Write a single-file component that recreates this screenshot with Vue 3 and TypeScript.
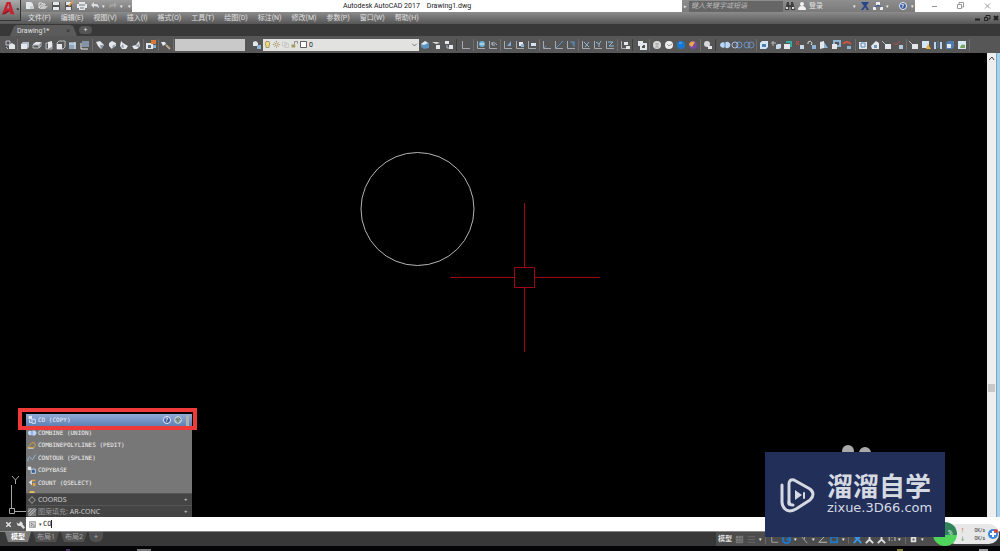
<script setup lang="ts">
import { ref } from 'vue'

type Shape = { d: string; f?: string; s?: string; w?: number }
type Tool = { icon: string; label: string }

const W = '#e4e8ed'
const B = '#8fb4d6'
const G = '#b9bdc2'
const axis: Shape = { d: 'M2.5 2v7.5H10', s: '#a4aab0' }

const icons: Record<string, Shape[]> = {
  new: [{ d: 'M2 2h5l2 2v5H2z', f: W }, { d: 'M6 6h4v3H6z', f: '#c9cdd2' }],
  open: [{ d: 'M2 3h3l1 1h2v1H4L2 8z', s: '#e2e2e2' }, { d: 'M5 6h6L8 9H2z', f: '#c8c8c8' }],
  save: [{ d: 'M2 2h8v8H2z', f: '#555' }, { d: 'M3 2h6v3H3zM3 7h6v3H3z', f: W }],
  saveas: [{ d: 'M2 2h7v8H2z', f: '#555' }, { d: 'M3 2h5v3H3zM3 7h5v3H3z', f: W }, { d: 'M6 6l4-5', s: '#d89a50', w: 2 }],
  print: [{ d: 'M3 2h6v2h2v4H9v2H3V8H1V4h2z', f: W }, { d: 'M3 5h6M4 8h4', s: '#777' }],
  undo: [{ d: 'M2 5l3-3v2h3q2 1 2 4Q8 6 5 6v2z', f: '#d5d5d5' }],
  redo: [{ d: 'M10 5L7 2v2H4Q2 5 2 8q2-2 5-2v2z', f: '#a0a0a0' }],
  views: [{ d: 'M2 2h4v4H2z', s: G }, { d: 'M5 6l3-2 3 2v4H5z', f: W }, { d: 'M2 8l2 2', s: G }],
  top: [{ d: 'M2 5l2-2h6v5L8 10H2z', f: '#aebccb' }, { d: 'M2 5h6v5H2z', f: W }],
  bottom: [{ d: 'M2 5l3-2h5L8 6H2z', f: W }, { d: 'M2 6h6v3H2zM8 6l2-3v4L8 9z', s: G }],
  left: [{ d: 'M3 4h6v6H3z', s: G }, { d: 'M5 3l4-1v6l-4 2z', f: W }],
  right: [{ d: 'M2 4l2-2h6v6L8 10H2z', s: G }, { d: 'M2 5h5v5H2z', f: W }],
  front: [{ d: 'M2 3h7v7H2z', f: '#8fa6bd' }, { d: 'M2 5h6M8 3v7', s: W }],
  back: [{ d: 'M3 2h7v6H3z', f: '#8295a8' }, { d: 'M2 4v6h7', s: W }],
  sw: [{ d: 'M2 3l4-1 4 4-3 4-3-3z', f: W }, { d: 'M6 6l1 4 3-4z', f: '#8d9aaa' }],
  se: [{ d: 'M3 4l3-2 4 2v3l-3 1-1 2-3-3z', f: W }, { d: 'M6 7l4-2-2 4z', f: '#97a3b1' }],
  ne: [{ d: 'M3 2l2 2 5 3-2 3H4L2 7z', f: W }, { d: 'M5 5L3 8l3 1z', f: '#8d9aaa' }],
  nw: [{ d: 'M9 2l1 5-3 3H4L2 7l4-1z', f: W }, { d: 'M5 7l4-2v3z', f: '#8d9aaa' }],
  camera: [{ d: 'M1 4h7v6H1z', f: W }, { d: 'M3 6h3v3H3z', f: '#59687a' }, { d: 'M6 1h5v4H6z', f: '#d57b38' }, { d: 'M8 6h3v3H8z', f: B }],
  brush: [{ d: 'M1 3h4l1 2-3 2z', f: W }, { d: 'M6 6l4 4', s: '#bca88a', w: 2 }],
  layers: [{ d: 'M2 3l3-1 2 2v3H2z', f: W }, { d: 'M6 6h4v4H6z', f: B }],
  layer1: [{ d: 'M2 5l4-3 4 2v5l-5 1-3-2z', f: '#5d92bd' }, { d: 'M2 5l4-3 3 2-4 2z', f: W }],
  layer2: [{ d: 'M1 3h5l3 1-4 1z', f: '#ddd' }, { d: 'M5 6h4v4H5z', f: W }],
  layer3: [{ d: 'M2 2h4v3H2zM6 6h4v4H6z', f: W }, { d: 'M4 6v3h2', s: G }],
  ucs: [axis],
  ucsWorld: [axis, { d: 'M4 5a3 3 0 1 0 6 0a3 3 0 1 0-6 0', f: '#68b1d2' }, { d: 'M5 5h4', s: W }],
  ucsPrev: [axis, { d: 'M5 5q2-3 5 1M5 3v3h3', s: '#aab7c6' }],
  ucsFace: [axis, { d: 'M5 7l4-5v5z', f: '#80a8d0' }],
  ucsObj: [axis, { d: 'M5 3h4v4H5z', f: W }, { d: 'M7 5h3v3H7z', f: B }],
  ucsView: [axis, { d: 'M5 4h5v3H5z', f: '#d4e3f3' }],
  ucsOrigin: [axis, { d: 'M3 9l2-2', s: '#6696bd' }],
  ucsZ: [axis, { d: 'M3 9l7-7', s: '#5a94c7' }],
  ucs3: [axis, { d: 'M5 3h3v3M9 2v6', s: '#5a94c7' }],
  ucsX: [axis, { d: 'M4 3l5 5M9 3L5 8', s: B }],
  ucsY: [axis, { d: 'M4 3l3 2 2-3M7 5v3', s: B }],
  ucsR: [axis, { d: 'M4 3h5L5 7h5', s: B }],
  ucsApply: [axis, { d: 'M5 3h4v3H5zM7 7h4v3H7z', f: W }],
  named: [{ d: 'M2 2h5v5H2z', f: W }, { d: 'M5 5h5v5H5z', s: W, w: 2 }],
  wire: [{ d: 'M2 6a4 4 0 1 0 8 0a4 4 0 1 0-8 0', f: '#d8d8d8' }, { d: 'M4 5h4M4 8h4M6 4v4', s: '#a5a5a5' }],
  hidden: [{ d: 'M2 6a4 4 0 1 0 8 0a4 4 0 1 0-8 0', f: '#eee' }, { d: 'M4 5l2 2 3-2', s: '#999' }],
  real: [{ d: 'M2 6a4 4 0 1 0 8 0a4 4 0 1 0-8 0', f: '#1878d0' }, { d: 'M4 4h3', s: '#72b7ee' }],
  concept: [{ d: 'M2 6a4 4 0 1 0 8 0a4 4 0 1 0-8 0', f: '#7849a7' }, { d: 'M2 6a4 4 0 0 1 6-3L5 8z', f: '#edac3d' }],
  styles: [{ d: 'M2 5a3 3 0 1 0 6 0a3 3 0 1 0-6 0', f: '#d8d8d8' }, { d: 'M6 7h4v3H6z', f: W }],
  union: [{ d: 'M1 6a3 3 0 0 1 5-2a3 3 0 1 1 0 4a3 3 0 0 1-5-2', f: '#bcd6f7' }, { d: 'M6 4v4', s: '#5383c4' }],
  subtract: [{ d: 'M5 6a3 3 0 1 0 6 0a3 3 0 1 0-6 0', s: '#6c96d0' }, { d: 'M1 6a3 3 0 1 0 6 0a3 3 0 1 0-6 0', s: '#a9bddb' }],
  intersect: [{ d: 'M1 6a3 3 0 1 0 6 0a3 3 0 1 0-6 0M5 6a3 3 0 1 0 6 0a3 3 0 1 0-6 0', s: '#6c8db9' }],
  extrude: [{ d: 'M2 4l2-2h6v6l-2 2H2z', f: '#d6e5f5' }, { d: 'M4 5h4v3H4z', f: '#4f7fae' }],
  move: [{ d: 'M1 4h5M3 2v5', s: '#bbb' }, { d: 'M6 6l2-1h3v4l-2 1H6z', f: '#c8d9eb' }],
  offset: [{ d: 'M2 5h6v5H2z', f: W }, { d: 'M4 2h6v6H8V4H4z', f: '#3aa89f' }],
  del: [{ d: 'M2 2l3 4M5 2L2 6', s: '#d54d45' }, { d: 'M6 6h4v4H6z', f: '#c8d9eb' }],
  rotate: [{ d: 'M2 5a2 2 0 1 1 3 1', s: W }, { d: 'M6 6h4v4H6z', f: B }],
  taper: [{ d: 'M2 3l4-1v7l-4 1z', f: W }, { d: 'M6 3l4 6H6z', f: B }],
  copyf: [{ d: 'M4 2h6v5H4z', s: B, w: 2 }, { d: 'M2 5h5v5H2z', f: W }],
  color: [{ d: 'M1 5q3-4 8 0', s: '#c95448', w: 2 }, { d: 'M5 7h4v3H5z', f: B }],
  imprint: [{ d: 'M2 3h8v7H2z', f: W }, { d: 'M4 4h4v4H4z', s: '#568ac2' }],
  clean: [{ d: 'M2 7l5-5 3 2v6H3z', f: W }, { d: 'M5 6h3v3H5z', f: '#6a9ac4' }],
  shell: [{ d: 'M1 2l3 3', s: G }, { d: 'M4 5h6v5H4z', f: W }],
  check: [{ d: 'M1 4l2 2 4-4', s: '#ba4e48' }, { d: 'M6 6h4v4H6z', f: '#b8c8dc' }],
  slice: [{ d: 'M2 2h7v7H2z', f: '#d3e6f7' }, { d: 'M8 5l3 5H6z', f: '#e8b140' }],
  thick: [{ d: 'M2 3h2v7H2zM8 3h2v7H8z', f: '#b8d4ee' }, { d: 'M6 2v7', s: '#4884bd' }],
  tosolid: [{ d: 'M2 4l2-2h6v6l-2 2H2z', f: '#4e7eb0' }, { d: 'M3 5h4v4H3z', f: W }],
  tosurf: [{ d: 'M2 2h8v8H2z', f: '#dbe9f6' }, { d: 'M4 9q1-5 5-3v3z', f: '#72a659' }],
  find: [{ d: 'M3 2h2v3h2V2h2l2 8H7V7H5v3H1z', f: '#3e3e3e' }, { d: 'M2 7h2v2H2zM8 7h2v2H8z', f: '#ddd' }],
  user: [{ d: 'M4 4a2 2 0 1 0 4 0a2 2 0 1 0-4 0M2 10q0-4 4-4t4 4z', f: '#f2f2f2' }],
  exchange: [{ d: 'M2 2l3 4-3 4h2l6-8H8zM5 2H3l5 8h2z', f: '#27438b' }],
  cloud: [{ d: 'M4 2h4v3H4zM1 7h3v3H1zM8 7h3v3H8z', f: '#eee' }, { d: 'M6 5v2M3 7l3-2 3 2', s: '#3c5795' }],
  copy: [{ d: 'M2 1h4v4H2z', f: W }, { d: 'M6 5h4v5H6zM3 6v3h3', s: '#e0ebfa' }],
  pedit: [{ d: 'M1 9l5-6q4 0 4 3t-3 3z', s: '#e0a53b' }, { d: 'M1 10h7', s: '#ddd' }],
  spline: [{ d: 'M1 10c1-10 4-3 5-2S9 2 11 2', s: '#9fc2ed' }],
  copybase: [{ d: 'M1 2h4v4H1z', f: W }, { d: 'M5 5h5v5H5z', f: '#345d91', s: '#dce8f6' }],
  qselect: [{ d: 'M2 5l4-3v7z', f: '#ddd' }, { d: 'M6 2h4v2H6zM7 6h3v4H7z', f: '#e0a345' }],
  gear: [{ d: 'M3 6a3 3 0 1 0 6 0a3 3 0 1 0-6 0', s: '#999' }, { d: 'M6 1v2M6 9v2M1 6h2M9 6h2', s: '#999' }],
  hatch: [{ d: 'M1 1h10v10H1z', f: '#777' }, { d: 'M2 9l7-7M3 11l8-8M1 6l4-4', s: '#ccc' }],
  grid: [{ d: 'M2 2h8v8H2z', f: '#7d7d7d' }, { d: 'M2 5h8M2 8h8M5 2v8M8 2v8', s: '#666' }],
  snap: [{ d: 'M2 3h8M2 6h8M2 9h8', s: '#696969' }],
  ortho: [{ d: 'M3 2v7h7', s: '#a8a8a8' }],
  polar: [{ d: 'M2 6a4 4 0 1 0 8 0a4 4 0 1 0-8 0M6 6h4', s: '#1b78d2', w: 2 }],
  iso: [{ d: 'M2 2l7 8M6 6V2', s: '#a8a8a8' }],
  track: [{ d: 'M9 2L2 9h9', s: '#c5c5c5' }],
  osnap: [{ d: 'M2 3h7v6H2z', s: '#2277bd', w: 2 }],
  annoBlue: [{ d: 'M6 1v4L2 10M6 5l4 5M3 4h6', s: '#3597ed', w: 2 }],
  anno: [{ d: 'M6 2v4l-4 4M6 6l4 4', s: '#ddd', w: 2 }],
  status: [{ d: 'M3 3h6v6H3z', f: '#ddd' }, { d: 'M5 5h2v2H5z', f: '#555' }],
  bulb: [{ d: 'M4 8Q2 5 4 2h4q2 3 0 6v2H4z', f: '#f0dc79', s: '#918756' }],
  sun: [{ d: 'M4 6a2 2 0 1 0 4 0a2 2 0 1 0-4 0M6 1v2M6 9v2M1 6h2M9 6h2M3 3l1 1M9 3L8 4M3 9l1-1M9 9L8 8', s: '#9c9254' }],
  freeze: [{ d: 'M2 3h5v5H2zM5 5h5v5H5z', s: '#c1c1bd' }],
  lock: [{ d: 'M2 6h5v4H2z', f: '#a59a67' }, { d: 'M6 6V2h4v3', s: '#777' }],
  swatch: [{ d: 'M2 2h8v8H2z', f: '#fff', s: '#333' }],
  wrench: [{ d: 'M1 3l2 2 2-1V2q4 0 4 4l3 4-2 2-4-4q-5 1-5-5z', f: '#e0e0e0' }],
  close: [{ d: 'M3 3l6 6M9 3L3 9', s: '#e5e5e5', w: 2 }],
  prompt: [{ d: 'M2 2h8v8H2z', f: '#c8c8c8', s: '#999' }, { d: 'M4 4l2 2-2 2M7 8h2', s: '#666' }],
}

const t = (s: string): Tool[] => s.split(' ').map((i) => ({ icon: i, label: i }))

const menus = ['文件(F)', '编辑(E)', '视图(V)', '插入(I)', '格式(O)', '工具(T)', '绘图(D)', '标注(N)', '修改(M)', '参数(P)', '窗口(W)', '帮助(H)']
const quick = t('new open save saveas print')
const viewGroups = [t('views'), t('top bottom left right front back'), t('sw se ne nw'), t('camera'), t('brush')]
const layerIcons = ['bulb', 'sun', 'freeze', 'lock', 'swatch']
const modelGroups: { tools: Tool[]; wide?: boolean }[] = [
  { tools: t('layer1 layer2 layer3'), wide: true },
  { tools: t('ucs') },
  { tools: t('ucsWorld ucsPrev') },
  { tools: t('ucsFace ucsObj ucsView') },
  { tools: t('ucsOrigin ucsZ ucs3') },
  { tools: t('ucsX ucsY ucsR') },
  { tools: t('ucsApply'), wide: true },
  { tools: t('named') },
  { tools: t('wire hidden real concept') },
  { tools: t('styles'), wide: true },
  { tools: t('union subtract intersect') },
  { tools: t('extrude move offset del rotate taper copyf color') },
  { tools: t('imprint clean shell check') },
  { tools: t('shell slice thick tosolid tosurf') },
]
const suggestions = [
  { icon: 'copy', text: 'CO (COPY)' },
  { icon: 'union', text: 'COMBINE (UNION)' },
  { icon: 'pedit', text: 'COMBINEPOLYLINES (PEDIT)' },
  { icon: 'spline', text: 'CONTOUR (SPLINE)' },
  { icon: 'copybase', text: 'COPYBASE' },
  { icon: 'qselect', text: 'COUNT (QSELECT)' },
]
const statusItems = ['grid', 'snap', '▾', '|', 'ortho', 'polar', '▾', 'iso', '▾', 'track', 'osnap', '▾', '|', 'annoBlue', 'anno', 'anno', '1:1', '▾', '|', 'status', '▾']
const layouts = ['模型', '布局1', '布局2']

const command = ref('CO')
const keyword = ref('')
const active = ref(0)
</script>

<template>
  <div class="app">
    <header class="head">
      <button class="logo" aria-label="应用程序菜单">
        <svg viewBox="0 0 21 21" class="logo-art">
          <path d="M2 15L7 2h4l4 13h-4l-1-3H7l-2 3z" fill="#c62430" />
          <path d="M7 9l2-5 1 5z" fill="#8d878a" />
          <path d="M2 15l6-4 2 1-5 3z" fill="#8c1823" />
          <path d="M17 9h3l-1 2z" fill="#222" />
        </svg>
      </button>
      <div class="title">
        <div class="quick">
          <button v-for="q in quick" :key="q.icon" :aria-label="q.label">
            <svg viewBox="0 0 12 12"><path v-for="(p, i) in icons[q.icon]" :key="i" :d="p.d" :fill="p.f ?? 'none'" :stroke="p.s" :stroke-width="p.w ?? 1" /></svg>
          </button>
          <button aria-label="放弃"><svg viewBox="0 0 12 12"><path :d="icons.undo[0].d" fill="#ddd" /></svg></button>
          <i class="caret">▾</i>
          <button aria-label="重做"><svg viewBox="0 0 12 12"><path :d="icons.redo[0].d" fill="#a5a5a5" /></svg></button>
          <i class="caret">▾</i>
          <i class="caret end">▾</i>
        </div>
        <h1>Autodesk AutoCAD 2017 &nbsp;&nbsp; Drawing1.dwg</h1>
        <div class="info">
          <i class="caret side">▸</i>
          <input v-model="keyword" class="search" placeholder="键入关键字或短语" aria-label="键入关键字或短语" />
          <button aria-label="搜索"><svg viewBox="0 0 12 12"><path v-for="(p, i) in icons.find" :key="i" :d="p.d" :fill="p.f ?? 'none'" /></svg></button>
          <button class="login"><svg viewBox="0 0 12 12"><path :d="icons.user[0].d" fill="#f2f2f2" /></svg>登录</button>
          <i class="caret push">▾</i>
          <button v-for="n in ['exchange', 'cloud']" :key="n" :aria-label="n">
            <svg viewBox="0 0 12 12"><path v-for="(p, i) in icons[n]" :key="i" :d="p.d" :fill="p.f ?? 'none'" :stroke="p.s" /></svg>
          </button>
          <i class="caret">▾</i>
          <button class="help" aria-label="帮助"><b>?</b></button>
          <i class="caret">▾</i>
        </div>
        <div class="winctl">
          <button aria-label="最小化"><svg viewBox="0 0 12 12"><path d="M4 6.500h5" stroke="#999" /></svg></button>
          <button aria-label="还原"><svg viewBox="0 0 12 12"><path d="M3.500 4.500h4v4h-4zM5 4V2.500h4.500V7H8" fill="none" stroke="#999" /></svg></button>
          <button aria-label="关闭"><svg viewBox="0 0 12 12"><path d="M4 3.500l5 5M9 3.500l-5 5" stroke="#999" /></svg></button>
        </div>
      </div>
      <nav class="menu">
        <button v-for="m in menus" :key="m">{{ m }}</button>
        <div class="docctl">
          <button aria-label="最小化图形"><svg viewBox="0 0 12 12"><path d="M3 7.500h5" stroke="#222" stroke-width="2" /></svg></button>
          <button aria-label="还原图形"><svg viewBox="0 0 12 12"><path d="M3.500 5.500h3v3h-3zM5 5V3.500h4V7H7" fill="none" stroke="#222" /></svg></button>
          <button aria-label="关闭图形"><svg viewBox="0 0 12 12"><path d="M4 4l4 4M8 4L4 8" stroke="#222" stroke-width="2" /></svg></button>
        </div>
      </nav>
    </header>

    <div class="tabs">
      <button class="tab">Drawing1*<span>×</span></button>
      <button class="add">+</button>
    </div>

    <div class="toolbar">
      <div v-for="(g, gi) in viewGroups" :key="gi" class="group">
        <button v-for="(b, bi) in g" :key="bi" :aria-label="b.label">
          <svg viewBox="0 0 12 12"><path v-for="(p, i) in icons[b.icon]" :key="i" :d="p.d" :fill="p.f ?? 'none'" :stroke="p.s" :stroke-width="p.w ?? 1" /></svg>
        </button>
      </div>
      <select class="style-select" aria-label="视觉样式" disabled><option></option></select>
      <div class="group layer-group">
        <button aria-label="图层特性"><svg viewBox="0 0 12 12"><path v-for="(p, i) in icons.layers" :key="i" :d="p.d" :fill="p.f" /></svg></button>
      </div>
      <div class="layer-box">
        <svg v-for="n in layerIcons" :key="n" viewBox="0 0 12 12"><path v-for="(p, i) in icons[n]" :key="i" :d="p.d" :fill="p.f ?? 'none'" :stroke="p.s" /></svg>
        <select aria-label="图层"><option>0</option></select>
        <svg class="chev" viewBox="0 0 12 12"><path d="M3 5l3 3 3-3" fill="none" stroke="#555" /></svg>
      </div>
      <div v-for="(g, gi) in modelGroups" :key="'m' + gi" class="group" :class="{ wide: g.wide }">
        <button v-for="(b, bi) in g.tools" :key="bi" :aria-label="b.label">
          <svg viewBox="0 0 12 12"><path v-for="(p, i) in icons[b.icon]" :key="i" :d="p.d" :fill="p.f ?? 'none'" :stroke="p.s" :stroke-width="p.w ?? 1" /></svg>
        </button>
      </div>
    </div>

    <main class="work">
      <div class="canvas">
        <svg class="drawing" width="987" height="464" viewBox="0 53 987 464" fill="none">
          <circle cx="417.500" cy="209" r="56.500" stroke="#b4b4b4" />
          <path d="M450 277.500h64M535 277.500h65M524.500 203v64M524.500 288v64M514.500 267.500h20v20h-20z" stroke="#9e0613" />
          <path d="M11.500 485v23M14 511.500h12M9.500 508.500h5v5h-5zM12 476l3.500 4 3.500-4M15.500 480v4" stroke="#a5a5a5" />
          <circle cx="848" cy="451" r="6" fill="#aaa" /><circle cx="865" cy="453" r="6" fill="#aaa" />
        </svg>
        <div class="popup">
          <ul class="list">
            <li v-for="(s, si) in suggestions" :key="s.text" :class="{ on: si === 0 }">
              <svg viewBox="0 0 12 12"><path v-for="(p, i) in icons[s.icon]" :key="i" :d="p.d" :fill="p.f ?? 'none'" :stroke="p.s" :stroke-width="p.w ?? 1" /></svg>
              <span>{{ s.text }}</span>
              <template v-if="si === 0">
                <button class="help" aria-label="命令帮助"><b>?</b></button>
                <button class="web" aria-label="联机搜索"><svg viewBox="0 0 12 12"><circle cx="6" cy="6" r="4" fill="#8fa5a0" stroke="#dce4e4" /><path d="M3 5h3v4M7 3l2 3" stroke="#4c6b59" fill="none" /></svg></button>
              </template>
            </li>
          </ul>
          <div class="more"><i></i></div>
          <div class="cat"><svg viewBox="0 0 12 12"><path v-for="(p, i) in icons.gear" :key="i" :d="p.d" fill="none" :stroke="p.s" /></svg><span>COORDS</span><b>+</b></div>
          <div class="cat"><svg viewBox="0 0 12 12"><path v-for="(p, i) in icons.hatch" :key="i" :d="p.d" :fill="p.f ?? 'none'" :stroke="p.s" /></svg><span><em>图案填充:</em> AR-CONC</span><b>+</b></div>
          <div class="thumb"></div>
          <div class="mark"></div>
        </div>
      </div>
      <div class="scroll">
        <svg viewBox="0 0 9 12"><path d="M2 7l3-3 2 3" fill="none" stroke="#444" /></svg>
        <i></i>
      </div>
      <div class="edge"></div>
      <div class="brand">
        <svg class="play" viewBox="0 0 36 36" fill="none" stroke="#d5d9e2" stroke-width="3" stroke-linejoin="round" stroke-linecap="round">
          <path d="M9 27V7q0-5 5-4l16 9q6 5 0 11l-14 9q-7 4-11 0-3-3-3-7V8" />
          <path d="M9 25q0 3 4 3" />
          <path d="M15 13l7 5-7 5z" fill="#d5d9e2" stroke="none" /><path d="M24 16v5" stroke-width="2" />
        </svg>
        <div class="brand-text"><strong>溜溜自学</strong><span>zixue.3D66.com</span></div>
      </div>
    </main>

    <div class="command">
      <div class="cmd-tools">
        <button aria-label="关闭命令行"><svg viewBox="0 0 12 12"><path :d="icons.close[0].d" stroke="#e5e5e5" stroke-width="2" /></svg></button>
        <button aria-label="自定义"><svg viewBox="0 0 12 12"><path :d="icons.wrench[0].d" fill="#e0e0e0" /></svg></button>
      </div>
      <svg class="prompt" viewBox="0 0 12 12"><path v-for="(p, i) in icons.prompt" :key="i" :d="p.d" :fill="p.f ?? 'none'" :stroke="p.s" /></svg>
      <i class="caret dark">▾</i>
      <div class="entry">
        <input v-model="command" aria-label="键入命令" size="2" /><span class="cursor"></span>
      </div>
    </div>

    <footer class="foot">
      <div class="layouts">
        <button v-for="(l, i) in layouts" :key="l" :class="{ on: active === i }" @click="active = i">{{ l }}</button>
        <button class="plus">+</button>
      </div>
      <div class="status">
        <button class="model">模型</button>
        <template v-for="(s, i) in statusItems" :key="i">
          <button v-if="icons[s]" :aria-label="s"><svg viewBox="0 0 12 12"><path v-for="(p, k) in icons[s]" :key="k" :d="p.d" :fill="p.f ?? 'none'" :stroke="p.s" :stroke-width="p.w ?? 1" /></svg></button>
          <i v-else-if="s === '|'" class="div"></i>
          <i v-else-if="s === '▾'" class="caret">▾</i>
          <span v-else>{{ s }}</span>
        </template>
      </div>
      <div class="net">
        <div class="ball">%</div>
        <div class="arrows"><i>↑</i><b>↓</b></div>
        <div class="rates"><span>0K/s</span><span>0K/s</span></div>
        <svg viewBox="0 0 12 12"><circle cx="6" cy="6" r="5" fill="#3b86d8" /><path d="M3 6h6M6 3v6" stroke="#fff" stroke-width="2" /><circle cx="9" cy="3" r="2" fill="#df4040" /></svg>
      </div>
    </footer>
    <div class="taskbar">
      <i class="violet"></i><i class="pane"></i><i class="amber"></i><i class="clock"></i>
    </div>
  </div>
</template>

<style>
html,
body {
  margin: 0;
  background: #000;
}
</style>

<style scoped>
.app {
  display: flex;
  flex-direction: column;
  height: 100vh;
  overflow: hidden;
  background: #000;
  color: #e0e0e0;
  font-family: Roboto, "Noto Sans CJK SC", sans-serif;
  font-size: 7px;
  line-height: 12px;
}
button,
input,
select {
  font: inherit;
  color: inherit;
  border: 0;
  padding: 0;
  margin: 0;
  background: none;
  border-radius: 0;
}
button {
  display: flex;
  align-items: center;
  justify-content: center;
  flex: none;
  white-space: nowrap;
}
svg {
  display: block;
  width: 12px;
  height: 12px;
  flex: none;
}
i,
em {
  font-style: normal;
}
.caret {
  width: 6px;
  font-size: 5px;
  text-align: center;
  color: #eee;
}
.head {
  display: grid;
  grid-template-columns: 21px 1fr;
  grid-template-rows: 12px 12px;
  flex: none;
  background: linear-gradient(#a0a0a0 45%, #8c8c8c 50%, #565656);
}
.logo {
  grid-row: 1 / 3;
  align-self: start;
  height: 21px;
  background: linear-gradient(#aaa, #666);
  border-right: 1px solid #333;
  border-bottom: 1px solid #333;
}
.logo-art {
  width: 20px;
  height: 20px;
}
.title {
  display: flex;
  background: #fff;
}
.quick {
  display: flex;
  align-items: center;
  width: 109px;
  padding-left: 2px;
  background: linear-gradient(#9d9d9d, #777);
}
.quick button {
  width: 13px;
  height: 12px;
}
.quick .end {
  margin-left: 2px;
}
h1 {
  flex: 1;
  margin: 0;
  font-size: 7px;
  font-weight: 400;
  text-align: center;
  color: #222;
}
.info {
  display: flex;
  align-items: center;
  width: 233px;
  background: linear-gradient(#8e8e8e, #7a7a7a);
}
.side {
  width: 7px;
}
.search {
  width: 94px;
  height: 11px;
  background: #666;
  font-style: italic;
  text-indent: 2px;
}
.search::placeholder {
  color: #bbb;
  opacity: 1;
}
.info button {
  width: 13px;
  height: 12px;
}
.info .login {
  width: 36px;
  gap: 1px;
  justify-content: flex-start;
}
.push {
  margin-left: 19px;
  margin-right: 1px;
}
.info .help {
  margin-left: 6px;
}
.help b {
  width: 6px;
  height: 6px;
  border: 1px solid #eef2fb;
  border-radius: 50%;
  background: #35559c;
  color: #fff;
  font-size: 6px;
  line-height: 6px;
  text-align: center;
}
.winctl {
  display: flex;
  justify-content: space-around;
  width: 85px;
  padding-left: 6px;
  box-sizing: border-box;
}
.winctl button {
  width: 24px;
}
.menu {
  display: flex;
  align-items: center;
  padding-left: 7px;
  gap: 10px;
}
.docctl {
  display: flex;
  margin-left: auto;
}
.docctl button {
  width: 9px;
}
.tabs {
  display: flex;
  align-items: center;
  height: 12px;
  flex: none;
  background: #383838;
  padding-left: 10px;
  gap: 2px;
}
.tab {
  width: 67px;
  height: 11px;
  align-self: flex-end;
  justify-content: space-between;
  padding: 0 7px;
  box-sizing: border-box;
  background: #5b5b5b;
  clip-path: polygon(0 100%, 4px 10%, 7px 0, 60px 0, 63px 10%, 100% 100%);
}
.tab span {
  color: #333;
}
.add {
  width: 13px;
  height: 8px;
  background: #555;
  border-radius: 4px;
}
.toolbar {
  display: flex;
  align-items: center;
  height: 17px;
  flex: none;
  padding-left: 4px;
  background: #565656;
}
.group {
  display: flex;
  padding-right: 1px;
  margin-right: 1px;
  border-right: 1px solid #6e6e6e;
}
.group.wide {
  margin-right: 3px;
  border-right-color: #3f3f3f;
}
.group button {
  width: 12px;
  height: 12px;
}
.layer-group {
  border: 0;
  margin: 0;
  padding: 0;
}
.style-select {
  appearance: none;
  width: 70px;
  height: 12px;
  margin-right: 6px;
  background: #c9c9c9;
  opacity: 1;
}
.layer-box {
  display: flex;
  align-items: center;
  width: 156px;
  height: 12px;
  background: #e2e2e0;
  color: #222;
}
.layer-box svg {
  width: 9px;
  height: 9px;
}
.layer-box select {
  appearance: none;
  flex: 1;
  min-width: 0;
  height: 12px;
  padding-left: 1px;
}
.work {
  position: relative;
  display: flex;
  flex: 1;
  min-height: 0;
}
.canvas {
  position: relative;
  flex: 1;
  min-width: 0;
}
.drawing {
  position: absolute;
  left: 0;
  bottom: 0;
  width: 987px;
  height: 464px;
}
.popup {
  position: absolute;
  left: 26px;
  bottom: 0;
  width: 166px;
  background: #777;
  font-family: "DejaVu Sans Mono", "Noto Sans CJK SC", monospace;
}
.list {
  display: grid;
  grid-template-rows: repeat(6, 1fr);
  height: 75px;
  margin: 0;
  padding: 0;
  list-style: none;
}
.list li {
  display: flex;
  align-items: center;
  padding-right: 9px;
}
.list svg,
.cat svg {
  width: 10px;
  height: 10px;
  margin: 0 1px;
}
.list span {
  flex: 1;
  color: #f2f2f2;
  font-size: 6px;
}
.list .on {
  background: linear-gradient(#8fabd6, #5c7cb1);
}
.list .help,
.list .web {
  width: 11px;
}
.more {
  height: 4px;
  padding-left: 3px;
  overflow: hidden;
}
.more i {
  display: block;
  width: 6px;
  height: 5px;
  margin-top: 2px;
  border-radius: 3px;
  background: #e6c25c;
}
.cat {
  display: flex;
  align-items: center;
  height: 11px;
  background: #454545;
  border-top: 1px solid #555;
  color: #ccc;
  font-family: "Noto Sans", "Noto Sans CJK SC", sans-serif;
}
.cat span {
  flex: 1;
}
.cat em {
  color: #999;
}
.cat b {
  width: 8px;
  font-size: 6px;
}
.thumb {
  position: absolute;
  top: 1px;
  right: 3px;
  width: 3px;
  height: 12px;
  background: #aeb1aa;
}
.mark {
  position: absolute;
  top: -6px;
  left: -8px;
  width: 171px;
  height: 14px;
  border: 4px solid #f03a3a;
}
.scroll {
  display: flex;
  flex-direction: column;
  width: 9px;
  background: #eee;
}
.scroll svg {
  width: 9px;
}
.scroll i {
  height: 8px;
  margin: auto 1px 125px;
  background: #c8c8c8;
}
.edge {
  width: 4px;
  background: #a5d2ea;
  border-left: 1px solid #75a8c4;
  box-sizing: border-box;
}
.brand {
  position: absolute;
  z-index: 4;
  right: 55px;
  bottom: -20px;
  display: flex;
  align-items: center;
  gap: 11px;
  width: 180px;
  height: 85px;
  padding-left: 15px;
  box-sizing: border-box;
  background: #222f58;
  color: #d5d9e2;
}
.play {
  width: 36px;
  height: 36px;
}
.brand-text {
  display: flex;
  flex-direction: column;
}
.brand strong {
  font-family: "Liberation Sans", "Noto Sans CJK SC", sans-serif;
  font-size: 26px;
  font-weight: 700;
  line-height: 26px;
}
.brand span {
  font-family: "DejaVu Sans", sans-serif;
  font-size: 13px;
  line-height: 16px;
}
.command {
  display: flex;
  align-items: center;
  height: 14px;
  flex: none;
  background: #fff;
  border-bottom: 1px solid #888;
  color: #222;
}
.cmd-tools {
  display: flex;
  align-items: center;
  width: 24px;
  height: 14px;
  padding-left: 2px;
  background: #5a5a5a;
}
.cmd-tools svg {
  width: 9px;
  height: 9px;
}
.cmd-tools button {
  width: 12px;
}
.prompt {
  width: 9px;
  height: 9px;
  margin-left: 2px;
}
.dark {
  color: #444;
}
.entry {
  display: flex;
  align-items: center;
  font-family: "DejaVu Sans Mono", monospace;
}
.entry input {
  width: 8px;
  height: 12px;
  outline: 0;
}
.cursor {
  width: 1px;
  height: 8px;
  background: #222;
}
.foot {
  position: relative;
  display: flex;
  height: 14px;
  flex: none;
  background: #383838;
}
.layouts {
  display: flex;
  align-items: flex-start;
  padding-left: 5px;
  gap: 2px;
}
.layouts button {
  width: 26px;
  height: 10px;
  background: #505050;
  color: #aaa;
  clip-path: polygon(0 0, 100% 0, 23px 100%, 3px 100%);
}
.layouts .on {
  background: #7a7a7a;
  color: #fff;
  font-weight: 700;
}
.layouts .plus {
  width: 14px;
  clip-path: none;
  border-radius: 0 0 6px 6px;
}
.status {
  display: flex;
  align-items: center;
  width: 228px;
  margin-left: auto;
  margin-right: 55px;
  padding-left: 1px;
  background: #4c4c4c;
}
.status button {
  width: 12px;
}
.status .model {
  width: 16px;
  font-weight: 700;
}
.status svg {
  width: 11px;
  height: 11px;
}
.status .div {
  width: 1px;
  height: 10px;
  margin: 0 2px;
  background: #6a6a6a;
}
.net {
  position: absolute;
  z-index: 3;
  right: 1px;
  bottom: 2px;
  display: flex;
  align-items: center;
  width: 54px;
  height: 20px;
  border-radius: 10px;
  background: #e8e8e8;
  color: #333;
  font-size: 5px;
  line-height: 8px;
}
.ball {
  width: 20px;
  height: 24px;
  padding-right: 4px;
  margin-left: -12px;
  border-radius: 50%;
  background: linear-gradient(#30835a 55%, #4fd45c 55%);
  color: #d8f5df;
  font-size: 8px;
  font-style: italic;
  line-height: 22px;
  text-align: right;
}
.arrows,
.rates {
  display: flex;
  flex-direction: column;
}
.arrows {
  margin-left: 3px;
  color: #db5b31;
}
.arrows b {
  color: #3f9d62;
}
.rates {
  margin-left: auto;
  margin-right: 2px;
}
.taskbar {
  display: flex;
  height: 5px;
  flex: none;
  background: #050508;
}
.taskbar i {
  height: 2px;
  margin-top: 3px;
}
.violet {
  width: 4px;
  margin-left: 66px;
  background: #4b2c70;
}
.pane {
  width: 14px;
  margin-left: 67px;
  background: #777;
}
.amber {
  width: 6px;
  margin-left: auto;
  background: #8a7a3a;
}
.clock {
  width: 9px;
  margin-left: 76px;
  margin-right: 12px;
  background: #999;
}
</style>
